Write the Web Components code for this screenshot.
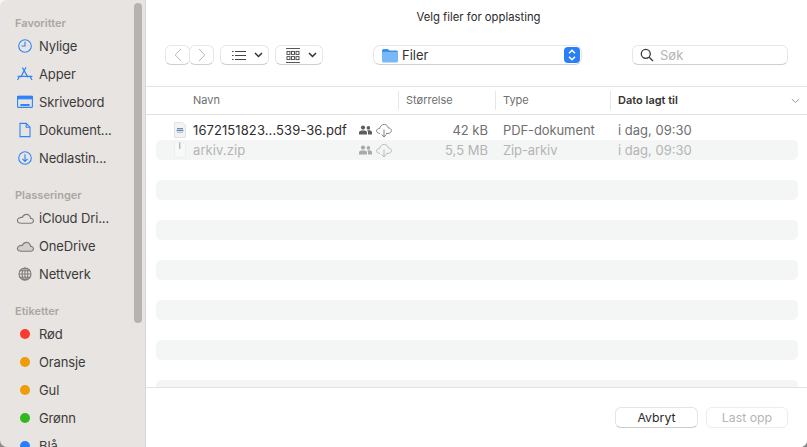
<!DOCTYPE html>
<html lang="nb">
<head>
<meta charset="utf-8">
<title>Velg filer for opplasting</title>
<style>
html, body { margin: 0; height: 100%; overflow: hidden; }
html { background: linear-gradient(#f6f5f4 50%, #8d8b89 50%); }
body { font-family: Inter, "Liberation Sans", sans-serif; font-size: 13px; color: #3a3a3a; }
</style>
</head>
<body>
<file-dialog>
  <side-bar slot="side">
    <side-section label="Favoritter">
      <side-item icon="clock">Nylige</side-item>
      <side-item icon="apps">Apper</side-item>
      <side-item icon="desktop">Skrivebord</side-item>
      <side-item icon="doc">Dokument...</side-item>
      <side-item icon="download">Nedlastin...</side-item>
    </side-section>
    <side-section label="Plasseringer">
      <side-item icon="cloud">iCloud Dri...</side-item>
      <side-item icon="cloudfill">OneDrive</side-item>
      <side-item icon="globe">Nettverk</side-item>
    </side-section>
    <side-section label="Etiketter">
      <side-item dot="#fb3b2d">Rød</side-item>
      <side-item dot="#ee9c0a">Oransje</side-item>
      <side-item dot="#ee9c0a">Gul</side-item>
      <side-item dot="#32b71e">Grønn</side-item>
      <side-item dot="#2580f7">Blå</side-item>
    </side-section>
  </side-bar>
  <dlg-toolbar slot="tools"></dlg-toolbar>
  <file-list slot="list">
    <file-row kind="pdf" name="1672151823...539-36.pdf" size="42 kB" type="PDF-dokument" date="i dag, 09:30"></file-row>
    <file-row kind="zip" off stripe name="arkiv.zip" size="5,5 MB" type="Zip-arkiv" date="i dag, 09:30"></file-row>
    <file-row></file-row>
    <file-row stripe></file-row>
    <file-row></file-row>
    <file-row stripe></file-row>
    <file-row></file-row>
    <file-row stripe></file-row>
    <file-row></file-row>
    <file-row stripe></file-row>
    <file-row></file-row>
    <file-row stripe></file-row>
    <file-row></file-row>
    <file-row stripe></file-row>
  </file-list>
  <dlg-footer slot="foot"></dlg-footer>
</file-dialog>

<script>
const ICONS = {
    clock: `<circle cx="9" cy="9" r="6.3"/><path d="M9 4.8V9H5.6"/>`,
    apps: `<path d="M10 2.2L4.6 12.4M6.4 2.6L12 12.4M1.6 11.4H16.4M3.4 11.4L1.6 15M14 11.4L16 15" stroke-width="1.2"/>`,
    desktop: `<rect x="1.6" y="3.4" width="14.8" height="11" rx="1"/><rect x="1.6" y="3.4" width="14.8" height="2.4" fill="currentColor"/><path d="M4.4 11.9H13.6" stroke-width="2"/>`,
    doc: `<path d="M4 2.4H10.2L14 6.2V15.6H4Z"/><path d="M10.2 2.4V6.2H14"/>`,
    download: `<circle cx="9" cy="9" r="6.3"/><path d="M9 5.2V12.4M6.4 9.9L9 12.5L11.6 9.9"/>`,
    cloud: `<path d="M5.2 14.2H14.4C16.6 14.2 17.6 12.9 17.4 11.5C17.2 10.1 16 9.2 14.6 9.4C14.4 7 12.4 5.2 10.2 5.4C8.4 5.5 7 6.7 6.4 8.4C3.4 8 1.4 9.8 1.4 11.6C1.4 13.2 3 14.2 5.2 14.2Z"/>`,
    cloudfill: `<path fill="#d2cfcd" d="M5.2 14.2H14.4C16.6 14.2 17.6 12.9 17.4 11.5C17.2 10.1 16 9.2 14.6 9.4C14.4 7 12.4 5.2 10.2 5.4C8.4 5.5 7 6.7 6.4 8.4C3.4 8 1.4 9.8 1.4 11.6C1.4 13.2 3 14.2 5.2 14.2Z"/>`,
    globe: `<circle cx="9" cy="9" r="6"/><ellipse cx="9" cy="9" rx="2.8" ry="6"/><path d="M3 9H15M3.9 5.8H14.1M3.9 12.2H14.1M9 3V15"/>`
};

function svgIcon(name, size)
{
    return `<svg width="${size}" height="${size}" viewBox="0 0 18 18" fill="none" stroke="currentColor" stroke-width="1.1">${ICONS[name]}</svg>`;
}


class FileDialog extends HTMLElement
{
    constructor()
    {
        super();
        this.attachShadow({mode: 'open'}).innerHTML = `
            <style>
                :host { display: flex; width: 807px; height: 447px; overflow: hidden; }
                .side { flex: 0 0 146px; height: 447px; }
                .main { flex: 1; min-width: 0; display: flex; flex-direction: column; background: #fff; border-bottom-right-radius: 7px; overflow: hidden; }
                .title { height: 35px; padding: 10px 0 0 4px; box-sizing: border-box; text-align: center; font-size: 11.3px; line-height: 14px; color: #2b2b2b; }
                .list { flex: 1; min-height: 0; overflow: hidden; }
            </style>
            <div class="side"><slot name="side"></slot></div>
            <div class="main">
                <div class="title">Velg filer for opplasting</div>
                <slot name="tools"></slot>
                <div class="list"><slot name="list"></slot></div>
                <slot name="foot"></slot>
            </div>`;
    }
}
customElements.define('file-dialog', FileDialog);


class SideBar extends HTMLElement
{
    constructor()
    {
        super();
        this.attachShadow({mode: 'open'}).innerHTML = `
            <style>
                :host { display: block; position: relative; width: 146px; height: 447px; overflow: hidden; box-sizing: border-box;
                        background: #e8e4e1; border-right: 1px solid #d9d6d4; border-top-left-radius: 7px; border-bottom-left-radius: 7px; }
                .thumb { position: absolute; left: 134px; top: 3px; width: 8px; height: 320px; border-radius: 4px; background: #b7b3b0; }
            </style>
            <slot></slot>
            <div class="thumb"></div>`;
    }
}
customElements.define('side-bar', SideBar);


class SideSection extends HTMLElement
{
    constructor()
    {
        super();
        this.attachShadow({mode: 'open'}).innerHTML = `
            <style>
                :host { display: block; padding-top: 13px; }
                .label { height: 19px; line-height: 21px; padding-left: 15px; font-size: 11px; font-weight: 600; color: #a9a6a4; }
            </style>
            <div class="label"></div>
            <slot></slot>`;
        this.shadowRoot.querySelector('.label').textContent = this.getAttribute('label');
    }
}
customElements.define('side-section', SideSection);


class SideItem extends HTMLElement
{
    constructor()
    {
        super();
        let dot = this.getAttribute('dot'),
            icon = this.getAttribute('icon'),
            gray = icon === 'cloud' || icon === 'cloudfill' || icon === 'globe';
        let glyph = dot ? `<span class="dot" style="background:${dot}"></span>` : svgIcon(icon, 18);
        this.attachShadow({mode: 'open'}).innerHTML = `
            <style>
                :host { display: flex; align-items: center; height: 28px; padding-left: 16px; font-size: 13px; letter-spacing: -.13px; color: #3c3b3a; }
                .icon { flex: 0 0 18px; width: 18px; height: 18px; margin-right: 5px; display: flex; align-items: center; justify-content: center; color: ${gray ? '#7d7b79' : '#2f84f6'}; }
                .dot { width: 10px; height: 10px; border-radius: 50%; }
            </style>
            <span class="icon">${glyph}</span><slot></slot>`;
    }
}
customElements.define('side-item', SideItem);


class DlgToolbar extends HTMLElement
{
    constructor()
    {
        super();
        const chevron = `<svg width="9" height="6" viewBox="0 0 9 6" fill="none" stroke="#333" stroke-width="1.5"><path d="M1 1L4.5 4.5L8 1"/></svg>`;
        this.attachShadow({mode: 'open'}).innerHTML = `
            <style>
                :host { display: flex; align-items: flex-start; height: 52px; padding: 10px 19px 0; box-sizing: border-box; border-bottom: 1px solid #e4e4e4; }
                .btn { height: 20px; box-sizing: border-box; background: #fff; border: 1px solid #e6e6e6; border-bottom-color: #cfcfcf; border-radius: 6px;
                       display: flex; align-items: center; justify-content: center; }
                .nav { width: 25px; color: #b9b9b9; }
                .nav + .nav { margin-left: -1px; }
                .view { width: 49px; gap: 8px; margin-left: 6px; justify-content: flex-start; padding-left: 11px; }
                .view + .view { width: 48px; padding-left: 10px; }
                .popup { width: 209px; margin-left: 50px; justify-content: flex-start; padding: 0 1px 0 8px; font-size: 13px; color: #333; border-radius: 7px; }
                .popup span { margin-left: 4px; flex: 1; }
                .step { width: 16px; height: 16px; border-radius: 4px; background: #2a7ff6; display: flex; align-items: center; justify-content: center; }
                .search { width: 156px; margin-left: 50px; justify-content: flex-start; padding-left: 7px; font-size: 13px; color: #b5b5b5; }
                .search span { margin-left: 6px; }
            </style>
            <div class="btn nav"><svg width="8" height="14" viewBox="0 0 8 14" fill="none" stroke="currentColor"><path d="M7 1L1.2 7L7 13"/></svg></div>
            <div class="btn nav"><svg width="8" height="14" viewBox="0 0 8 14" fill="none" stroke="currentColor"><path d="M1 1L6.8 7L1 13"/></svg></div>
            <div class="btn view">
                <svg width="14" height="11" viewBox="0 0 14 11" fill="none" stroke="#444"><path d="M0 1.5H1.5M0 5.5H1.5M0 9.5H1.5M3 1.5H14M3 5.5H14M3 9.5H14"/></svg>
                ${chevron}
            </div>
            <div class="btn view">
                <svg width="14" height="15" viewBox="0 0 14 15" fill="none" stroke="#444" stroke-width=".9"><path d="M0 .5H14M0 14.5H14"/><rect x="1" y="3.4" width="3" height="3"/><rect x="5.5" y="3.4" width="3" height="3"/><rect x="10" y="3.4" width="3" height="3"/><rect x="1" y="8.6" width="3" height="3"/><rect x="5.5" y="8.6" width="3" height="3"/><rect x="10" y="8.6" width="3" height="3"/></svg>
                ${chevron}
            </div>
            <div class="btn popup">
                <svg width="16" height="15" viewBox="0 0 16 15"><path fill="#3f93e6" d="M0 2.5A1.5 1.5 0 0 1 1.5 1H6L7.5 2.5H14.5A1.5 1.5 0 0 1 16 4V5H0Z"/><path fill="#78b8f7" d="M0 4H16V13A1.5 1.5 0 0 1 14.5 14.5H1.5A1.5 1.5 0 0 1 0 13Z"/></svg>
                <span>Filer</span>
                <div class="step"><svg width="8" height="12" viewBox="0 0 8 12" fill="none" stroke="#fff" stroke-width="1.5"><path d="M1 4.2L4 1.2L7 4.2M1 7.8L4 10.8L7 7.8"/></svg></div>
            </div>
            <div class="btn search">
                <svg width="14" height="14" viewBox="0 0 14 14" fill="none" stroke="#3b3b3b" stroke-width="1.3"><circle cx="5.8" cy="5.8" r="4.5"/><path d="M9.2 9.2L13 13"/></svg>
                <span>Søk</span>
            </div>`;
    }
}
customElements.define('dlg-toolbar', DlgToolbar);


class FileList extends HTMLElement
{
    constructor()
    {
        super();
        this.attachShadow({mode: 'open'}).innerHTML = `
            <style>
                :host { display: block; height: 300px; overflow: hidden; }
                .head { display: grid; grid-template-columns: 252px 97px 115px 1fr; height: 27px; border-bottom: 1px solid #e2e2e2; box-sizing: content-box; align-items: center; font-size: 11px; color: #6f6f6f; }
                .head div { height: 19px; line-height: 19px; padding-left: 7px; border-left: 1px solid #e6e6e6; position: relative; }
                .head div:first-child { border: 0; padding-left: 47px; }
                .head .on { color: #333; font-weight: 600; }
                .head svg { position: absolute; right: 7px; top: 7px; }
                .rows { padding: 5px 9px 0 10px; }
            </style>
            <div class="head">
                <div>Navn</div><div>Størrelse</div><div>Type</div>
                <div class="on">Dato lagt til<svg width="9" height="6" viewBox="0 0 9 6" fill="none" stroke="#9a9a9a"><path d="M.8 1L4.5 4.6L8.2 1"/></svg></div>
            </div>
            <div class="rows"><slot></slot></div>`;
    }
}
customElements.define('file-list', FileList);


class FileRow extends HTMLElement
{
    constructor()
    {
        super();
        let name = this.getAttribute('name'),
            kind = this.getAttribute('kind');
        const cloud = `<svg width="16" height="15" viewBox="0 0 16 15" fill="none" stroke="#777" stroke-width=".9"><path d="M4 10.4C2 10.4 .6 9.4 .6 7.9C.6 6.4 2 5.4 3.6 5.6C4 3.2 6 1.4 8.2 1.4C10.4 1.4 12 3 12.3 5C14 5 15.4 6.1 15.4 7.7C15.4 9.3 14 10.4 12 10.4H10"/><path d="M8 6.4V14M5.6 11.4L8 14L10.4 11.4"/></svg>`;
        const people = `<svg width="13" height="10" viewBox="0 0 13 10" fill="#5f5f5f"><circle cx="4" cy="2.6" r="2.1"/><circle cx="9.4" cy="2.9" r="1.8"/><path d="M0 9.4V7.4C0 5.9 1.6 5.4 4 5.4C6.4 5.4 8 5.9 8 7.4V9.4ZM9 9.4V7.2C9 6.4 8.6 5.8 8.2 5.4C10.8 5.2 13 5.8 13 7.2V9.4Z"/></svg>`;
        const fileIcon = kind === 'pdf'
            ? `<svg width="14" height="16" viewBox="0 0 14 16"><path fill="#f3f3f3" stroke="#d8d8d8" stroke-width=".7" d="M1.5 .5H9.5L12.5 3.5V15.5H1.5Z"/><path fill="#8a8a8a" d="M4 6H10V7H4Z"/><path fill="#4f8fd0" d="M3.6 7.6H10.4V9.2H3.6Z"/><path fill="#b0b0b0" d="M4 10H10V10.7H4Z"/></svg>`
            : `<svg width="14" height="16" viewBox="0 0 14 16"><path fill="#fbfbfb" stroke="#e2e2e2" stroke-width=".7" d="M1.5 .5H9.5L12.5 3.5V15.5H1.5Z"/><path fill="#777" d="M6 .5H7.4V7H6Z"/></svg>`;
        let body = name ? `
            <div class="ico">${fileIcon}</div>
            <div class="name"><span class="n"></span><span class="marks">${people}${cloud}</span></div>
            <div class="size"></div><div class="type"></div><div class="date"></div>` : '';
        this.attachShadow({mode: 'open'}).innerHTML = `
            <style>
                :host { display: grid; grid-template-columns: 37px 205px 97px 115px 1fr; align-items: center; height: 20px; font-size: 13px; color: #2e2e2e; border-radius: 5px; }
                :host([stripe]) { background: #f4f5f5; }
                :host([off]) { color: #b4b4b4; }
                :host([off]) svg { opacity: .5; }
                .ico { display: flex; justify-content: center; padding-left: 11px; }
                .name { display: flex; align-items: center; justify-content: space-between; padding-right: 6px; letter-spacing: .09px; }
                .marks { display: flex; align-items: center; gap: 4px; }
                .size { text-align: right; padding-right: 7px; color: #6f6f6f; }
                .type, .date { padding-left: 8px; color: #6f6f6f; }
                .type { letter-spacing: -.1px; }
                :host([off]) .size, :host([off]) .type, :host([off]) .date { color: #b4b4b4; }
            </style>${body}`;
        if(name)
        {
            this.shadowRoot.querySelector('.n').textContent = name;
            this.shadowRoot.querySelector('.size').textContent = this.getAttribute('size');
            this.shadowRoot.querySelector('.type').textContent = this.getAttribute('type');
            this.shadowRoot.querySelector('.date').textContent = this.getAttribute('date');
        }
    }
}
customElements.define('file-row', FileRow);


class DlgFooter extends HTMLElement
{
    constructor()
    {
        super();
        this.attachShadow({mode: 'open'}).innerHTML = `
            <style>
                :host { display: flex; justify-content: flex-end; gap: 8px; flex: 0 0 60px; height: 60px; padding: 19px 19px 0 0; box-sizing: border-box; border-top: 1px solid #e2e2e2; background: #fff; }
                .b { width: 83px; height: 21px; box-sizing: border-box; border: 1px solid #e4e4e4; border-bottom-color: #cbcbcb; border-radius: 6px; text-align: center; line-height: 19px; font-size: 12.3px; color: #2b2b2b; background: #fff; }
                .b.off { width: 82px; color: #b5b5b5; border-color: #ececec; }
            </style>
            <div class="b">Avbryt</div>
            <div class="b off">Last opp</div>`;
    }
}
customElements.define('dlg-footer', DlgFooter);
</script>
</body>
</html>
